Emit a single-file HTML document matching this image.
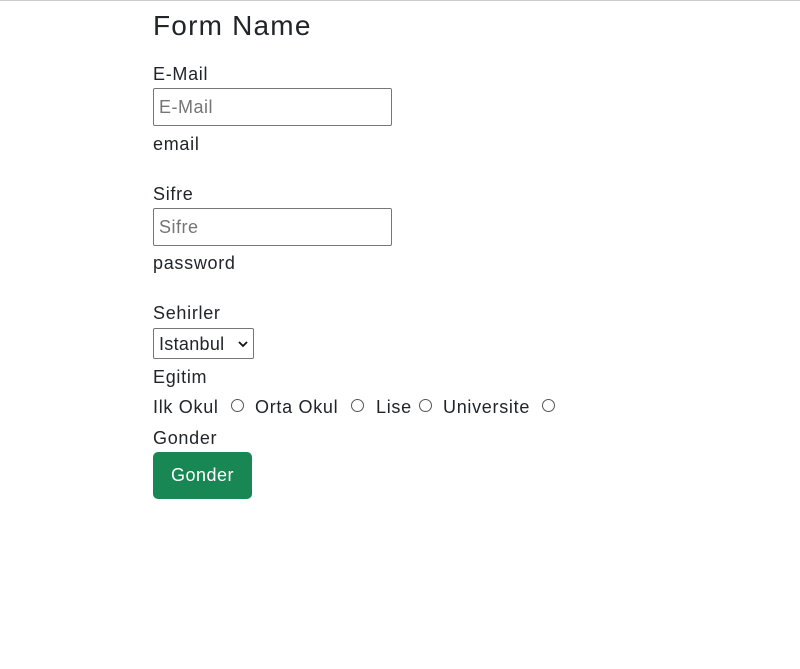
<!DOCTYPE html>
<html><head><style>
html,body{margin:0;padding:0;background:#fff;width:800px;height:669px;overflow:hidden}
body{border-top:1px solid #ccc;box-sizing:border-box;font-family:"Liberation Sans",sans-serif;color:#212529;position:relative}
.t{position:absolute;left:153px;font-size:18px;letter-spacing:0.7px;line-height:20px;white-space:nowrap}
.box{position:absolute;left:153px;border:1px solid #767676;border-radius:2px;box-sizing:border-box;background:#fff}
.ph{color:#757575;font-size:18px;letter-spacing:0.5px;position:absolute;left:5px;top:8px;line-height:20px}
.r{position:absolute;top:398px;width:13px;height:13px;border:1px solid #555;border-radius:50%;box-sizing:border-box}
</style></head><body>
<div class="t" style="top:10px;font-size:28px;letter-spacing:1.2px;line-height:30px">Form Name</div>
<div class="t" style="top:63px">E-Mail</div>
<div class="box" style="top:87px;width:239px;height:38px"><span class="ph">E-Mail</span></div>
<div class="t" style="top:133px">email</div>
<div class="t" style="top:183px">Sifre</div>
<div class="box" style="top:207px;width:239px;height:38px"><span class="ph">Sifre</span></div>
<div class="t" style="top:252px">password</div>
<div class="t" style="top:302px">Sehirler</div>
<div class="box" style="top:327px;width:101px;height:31px"><span style="position:absolute;left:5px;top:5px;font-size:18px;letter-spacing:0.3px;line-height:20px;color:#212529">Istanbul</span><svg style="position:absolute;left:84px;top:11px" width="10" height="8" viewBox="0 0 10 8"><path d="M1 2 L5 6 L9 2" stroke="#111" stroke-width="1.8" fill="none"/></svg></div>
<div class="t" style="top:366px">Egitim</div>
<div class="t" style="top:396px">Ilk Okul</div>
<div class="t" style="top:396px;left:255px">Orta Okul</div>
<div class="t" style="top:396px;left:376px">Lise</div>
<div class="t" style="top:396px;left:443px">Universite</div>
<span class="r" style="left:231px"></span>
<span class="r" style="left:351px"></span>
<span class="r" style="left:419px"></span>
<span class="r" style="left:542px"></span>
<div class="t" style="top:427px">Gonder</div>
<div style="position:absolute;left:153px;top:451px;width:99px;height:47px;background:#198754;border-radius:5px;color:#fff;font-size:18px;letter-spacing:0.5px;line-height:47px;text-align:center">Gonder</div>
</body></html>
